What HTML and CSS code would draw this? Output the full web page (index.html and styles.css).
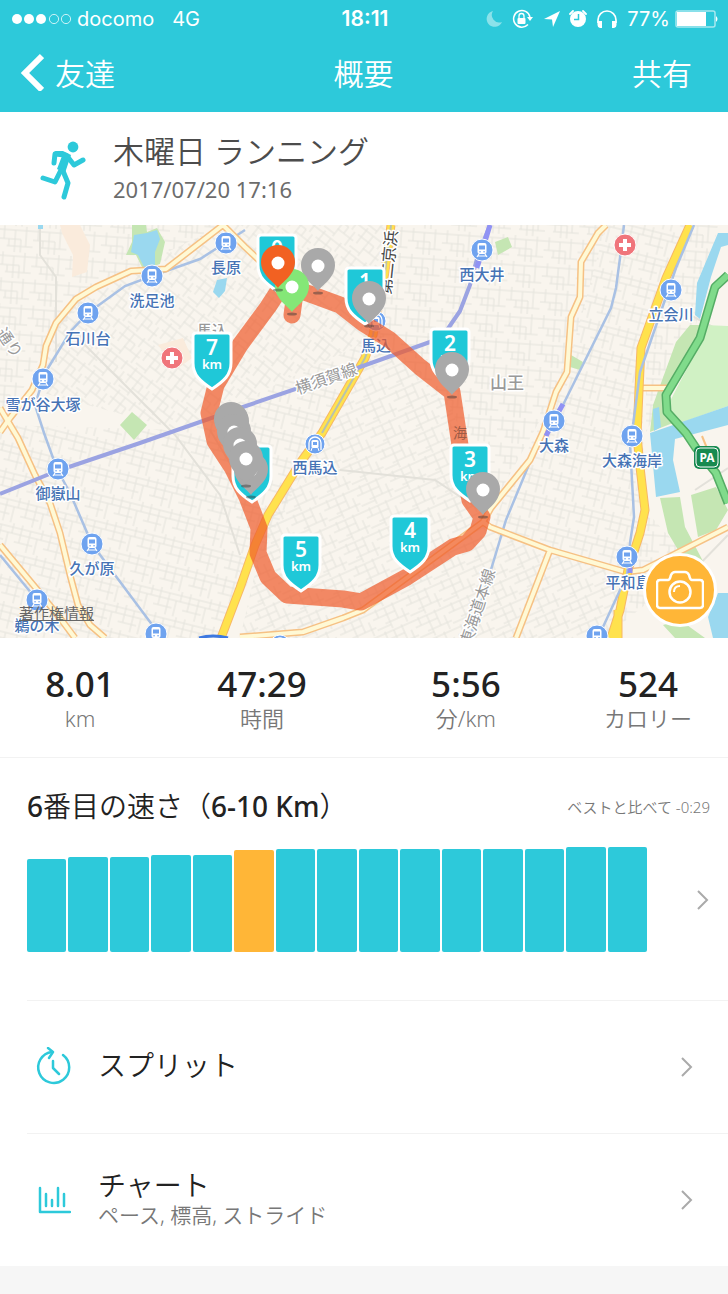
FILE: index.html
```html
<!DOCTYPE html>
<html lang="ja">
  <head>
    <meta charset="UTF-8" />
    <meta name="viewport" content="width=device-width, initial-scale=1.0" />
    <title>木曜日 ランニング - 概要</title>
    <link rel="stylesheet" href="styles.css">
  </head>
  <body>
    <header class="top">
      <div class="status-bar">
        <div class="status-left">
          <svg class="signal" width="62" height="12" viewBox="0 0 62 12">
            <g fill="#fff">
              <circle cx="6" cy="6" r="5" />
              <circle cx="18" cy="6" r="5" />
              <circle cx="30" cy="6" r="5" />
            </g>
            <g fill="none" stroke="#fff" stroke-opacity=".75">
              <circle cx="43" cy="6" r="4.6" />
              <circle cx="55" cy="6" r="4.6" />
            </g>
          </svg>
          <span class="carrier">docomo</span>
          <span>4G</span>
        </div>
        <span class="clock">18:11</span>
        <div class="status-right">
          <svg width="18" height="20" viewBox="0 0 18 20">
            <path d="M8 2A8 8 0 1 0 17 13 7.5 7.5 0 0 1 8 2Z" fill="#8be2ea" />
          </svg>
          <svg width="22" height="20" viewBox="0 0 22 20">
            <path d="M18 8A8.300 8.300 0 1 0 16 15.500" fill="none" stroke="#fff" stroke-width="1.5" />
            <path d="M15 8h6l-3 4z" fill="#fff" />
            <rect x="5.5" y="9" width="8" height="6" rx="1" fill="#fff" />
            <path d="M7 9V7a2.500 2.500 0 0 1 5 0v2" fill="none" stroke="#fff" stroke-width="1.3" />
          </svg>
          <svg width="17" height="20" viewBox="0 0 17 20">
            <path d="M17 2 10 18 9 10.500 1 10z" fill="#fff" />
          </svg>
          <svg width="18" height="20" viewBox="0 0 18 20">
            <circle cx="9" cy="10" r="8" fill="#fff" />
            <path d="M1 5 4 2M17 5 14 2" stroke="#fff" stroke-width="1.8" stroke-linecap="round" />
            <path d="M9.500 5v5.500H5" fill="none" stroke="#2dc9da" stroke-width="1.5" />
          </svg>
          <svg width="22" height="20" viewBox="0 0 22 20">
            <path d="M2 14v-3a9 9 0 0 1 18 0v3" fill="none" stroke="#fff" stroke-width="1.7" />
            <path d="M1.500 12H6v7H4a3 3 0 0 1-2.500-3zM20.500 12H16v7h2a3 3 0 0 0 2.500-3z" fill="#fff" />
          </svg>
          <span class="percent">77%</span>
          <svg width="44" height="20" viewBox="0 0 44 20">
            <rect x="1" y="2" width="39" height="16" rx="2" fill="none" stroke="#a8e8ef" stroke-width="1.5" />
            <rect x="2" y="3" width="29" height="14" fill="#fff" />
            <path d="M41 7q3 3 0 6z" fill="#fff" />
          </svg>
        </div>
      </div>
      <nav class="nav-bar">
        <a href="#friends" class="back">
          <svg width="24" height="38" viewBox="0 0 24 38">
            <path d="M22 3 5 20l17 17" fill="none" stroke="#fff" stroke-width="6" />
          </svg>
          友達
        </a>
        <h1>概要</h1>
        <button type="button" class="share">共有</button>
      </nav>
    </header>

    <main>
      <section class="activity">
        <svg class="runner" width="50" height="62" viewBox="0 0 50 62">
          <circle cx="35" cy="9" r="5.4" fill="#2dc9da" />
          <path d="M16 13h9l8 4-6 18-8-4 5-13z" fill="#2dc9da" />
          <g fill="none" stroke="#2dc9da" stroke-width="5" stroke-linecap="round" stroke-linejoin="round">
            <path d="M16 25l1-9 10 1M29 18l7 9 9-5" />
            <path d="M23 32l-6 12-12-4" />
            <path d="M25 33l5 12-4 14" />
          </g>
        </svg>
        <div>
          <h2>木曜日 ランニング</h2>
          <p>2017/07/20 17:16</p>
        </div>
      </section>

      <section class="map">
        <svg class="map-canvas" viewBox="0 0 728 413" role="img" aria-label="ランニングのルート">
          <defs>
            <pattern id="streets-a" width="34" height="26" patternUnits="userSpaceOnUse" patternTransform="rotate(4)">
              <path d="M0 4H34M0 13H22M8 20H34M5 0V13M16 4V26M27 0V20M22 13V26M10 13V20" />
            </pattern>
            <pattern id="streets-b" width="32" height="28" patternUnits="userSpaceOnUse" patternTransform="rotate(38)">
              <path d="M0 3H32M0 11H20M12 19H32M4 0V19M13 3V28M24 0V11M28 11V28M20 11V19M0 25H13" />
            </pattern>
            <pattern id="streets-c" width="36" height="24" patternUnits="userSpaceOnUse" patternTransform="rotate(-24)">
              <path d="M0 2H36M0 9H24M10 17H36M6 0V9M15 2V24M24 0V17M31 9V24M0 20H15" />
            </pattern>
            <pattern id="streets-d" width="30" height="26" patternUnits="userSpaceOnUse" patternTransform="rotate(14)">
              <path d="M0 4H30M0 10H30M0 18H19M5 0V18M14 4V26M22 10V26M26 0V10" />
            </pattern>

            <g id="train">
              <circle r="11" fill="#6fa3ef" stroke="#fff" />
              <rect x="-4.5" y="-7" width="9" height="11" rx="2" fill="#fff" />
              <path d="M-3-4.500h6v4h-6z" fill="#6fa3ef" />
              <path d="M-2 1.700h.1M2 1.700h.1" stroke="#6fa3ef" stroke-width="1.5" stroke-linecap="round" />
              <path d="M-3 4-5 7M3 4 5 7M-4 6h8" stroke="#fff" stroke-width="1.2" />
            </g>
            <g id="metro">
              <circle r="10" fill="#6fa3ef" stroke="#fff" />
              <path d="M-6 6V-1a6 6 0 0 1 12 0v7" fill="none" stroke="#fff" stroke-width="1.3" />
              <rect x="-3.5" y="-4" width="7" height="8" rx="1.5" fill="#fff" />
              <path d="M-2-2h4v3h-4z" fill="#6fa3ef" />
              <path d="M-3 4-4 7M3 4 4 7" stroke="#fff" />
            </g>
            <g id="hospital">
              <circle r="11" fill="#f0757b" stroke="#fff" />
              <path d="M0-6V6M-6 0H6" stroke="#fff" stroke-width="4" />
            </g>
            <path id="shield" d="M-16 1h32a3 3 0 0 1 3 3V31C19 43 12 49 0 57-12 49-19 43-19 31V4a3 3 0 0 1 3-3Z" />
            <g id="pin">
              <ellipse cx="0" cy="27" rx="5" ry="1.5" fill="#333" fill-opacity=".45" />
              <path d="M0 25C-4 19-17 12-17-1a17 17 0 0 1 34 0C17 12 4 19 0 25Z" />
              <circle r="6.5" fill="#fff" />
            </g>
          </defs>

          <rect width="728" height="413" fill="#f9f5ee" />

          <!-- street grids -->
          <g class="streets">
            <path d="M0 0h223L96 62 46 121 0 207z" fill="url(#streets-a)" />
            <path d="M223 0h167l-10 110-200 95-148-40 24-67L96 62z" fill="url(#streets-b)" />
            <path d="M390 0h216l-39 147-76 136-40-100-71-73z" fill="url(#streets-a)" />
            <path d="M380 110l71 73 40 100-128 102-60 22-63 6 30-130z" fill="url(#streets-c)" />
            <path d="M0 200l180 5 190-90-150 298H0z" fill="url(#streets-d)" />
            <path d="M606 0h84l-49 123 4 162-17 60-78-20-60-23 76-155z" fill="url(#streets-d)" />
            <path d="M363 385l120-85 145 45-17 68H240z" fill="url(#streets-c)" />
            <path d="M690 0h28l-22 100-50 108v-85zM645 285l50 55-75 60z" fill="url(#streets-a)" />
          </g>
          <g fill="none" stroke="#e3e1da" stroke-width="2">
            <path d="M40 0v30l16 22v85M80 115l95 95 45 60 20 60M210 205l30 50M480 285l-45-30-95-10M690 90l38 20M695 265l33-22M694 345l34-35" />
          </g>

          <!-- parks and water -->
          <g fill="#c5e6b3">
            <path d="M132 0h14l1 7 10-4 8 14-5 22-17 5-7-14H126l6-13z" />
            <path d="M132 187l15 13-13 15-14-15zM495 17l13-5 4 10-14 8zM571 130l12 7-3 8-10-3z" />
            <path d="M690 100l-14 17-23 63-3 27 23-9-7-28 34-57 4-13zM660 273l20-1 5 30 20 38-15 5-22-37zM691 270l25-8 12 23-12 20-18 7zM663 400l17-5 25 18h-30z" />
          </g>
          <path d="M704 100l24 1v80l-53 19-7-20 35-67z" fill="#d0f1c4" />
          <path d="M60 0h20l10 20-3 27-15 5 1-22-11-22zM158 120l25-7 9 20-15 11z" fill="#faebdc" />
          <g fill="#9ad8ef">
            <path d="M134 10l13-2 10-3 3 9-5 13v14l-11 1-6-12-7-3zM217 55l10-2-2 13-6 7-6-6zM38 0h5v4h-5z" />
            <path d="M718 8h10v12l-7 2-10 30-11 42-5-4 2-32zM650 208l78-27v19l-53 14-2 21 7 32-24 5zM653 184l6-2 2 20-7 4zM718 368h10v45h-15l-5-21z" />
          </g>

          <!-- railways -->
          <g fill="none" stroke="#a9c1e4" stroke-width="2.5">
            <path d="M245 5 225 18 200 34 152 51 125 61 88 88 70 107 45 148 35 180 44 208 57 244 70 268 92 319 115 350 156 405" />
            <path d="M0 330 37 375M624 0 620 33 616 63 611 83 563 180M545 208 535 225 506 295 490 348 470 413" />
          </g>

          <!-- roads, orange casing first -->
          <g fill="none" stroke-linejoin="round">
            <g stroke="#f6c184" stroke-width="7">
              <path d="M0 207 10 193 32 165 43 140 46 121 56 98 76 74 96 62 131 46 166 44 223 0 245 22 262 38" />
              <path d="M0 183 18 213 35 250 50 278 60 308 70 350 78 380 90 400 105 413M0 320 35 362 60 393 75 413" />
              <path d="M606 0 598 8 581 37 580 72 571 92 567 147 556 167 543 207 530 235 491 283 483 297 490 302 550 325 626 347 643 345 728 302M550 325 516 413M483 297 363 385 343 393 303 407 240 412M643 163h25" />
            </g>
            <path d="M702 211l26 64" stroke="#f6c184" stroke-width="2" />
            <g stroke="#fff9d5" stroke-width="4">
              <path d="M0 207 10 193 32 165 43 140 46 121 56 98 76 74 96 62 131 46 166 44 223 0 245 22 262 38" />
              <path d="M0 183 18 213 35 250 50 278 60 308 70 350 78 380 90 400 105 413M0 320 35 362 60 393 75 413" />
              <path d="M606 0 598 8 581 37 580 72 571 92 567 147 556 167 543 207 530 235 491 283 483 297 490 302 550 325 626 347 643 345 728 302M550 325 516 413M483 297 363 385 343 393 303 407 240 412M643 163h25" />
            </g>
            <g stroke="#f7b765" stroke-width="9">
              <path d="M391 0 385 47 373 110 365 133 322 208 300 238 268 290 255 320 240 363 221 413" />
              <path d="M690 0 666 53 641 123 640 143 637 210 640 242 645 285 640 308 628 345 620 385 611 413M618 385v28" />
            </g>
            <g stroke="#ffe24d" stroke-width="7">
              <path d="M391 0 385 47 373 110 365 133 322 208 300 238 268 290 255 320 240 363 221 413" />
              <path d="M690 0 666 53 641 123 640 143 637 210 640 242 645 285 640 308 628 345 620 385 611 413M618 385v28" />
            </g>
            <path d="M391 0 385 47 373 110 365 133 322 208" stroke="#b9c2ae" stroke-width="2" />
            <path d="M694 0 676 43 640 147 633 200M630 218 634 292 630 318 627 350 603 402" stroke="#a9c1e4" stroke-width="2.5" />
            <path d="M0 269 57 246 140 218 240 183 360 142 430 117 447 105 460 86 470 60 478 30 490 0" stroke="#9ba3e2" stroke-width="4" />
            <path d="M490 0 477 43M563 179 558 188M549 205l-3 6M630 342v6" stroke="#9092f4" stroke-width="5" />
            <path d="M728 50 715 62 700 113 666 170 667 187 686 208 696 223 716 248 728 278" stroke="#55ad65" stroke-width="9" />
            <path d="M728 50 715 62 700 113 666 170 667 187 686 208 696 223 716 248 728 278" stroke="#80db8b" stroke-width="6" />
          </g>

          <!-- stations and places -->
          <use href="#train" x="226" y="18" />
          <use href="#train" x="152" y="51" />
          <use href="#train" x="88" y="88" />
          <use href="#train" x="43" y="154" />
          <use href="#train" x="58" y="244" />
          <use href="#train" x="92" y="319" />
          <use href="#train" x="37" y="375" />
          <use href="#train" x="156" y="409" />
          <use href="#train" x="482" y="25" />
          <use href="#train" x="671" y="65" />
          <use href="#train" x="554" y="196" />
          <use href="#train" x="632" y="211" />
          <use href="#train" x="627" y="332" />
          <use href="#train" x="597" y="411" />
          <use href="#metro" x="315" y="219" />
          <use href="#metro" x="376" y="96" />
          <use href="#metro" x="280" y="420" />
          <use href="#hospital" x="172" y="133" />
          <use href="#hospital" x="625" y="20" />
          <path d="M199 413q14-4 29 0" fill="none" stroke="#3d78e0" stroke-width="3" />

          <g class="map-label">
            <text x="226" y="48">長原</text>
            <text x="152" y="81">洗足池</text>
            <text x="88" y="119">石川台</text>
            <text x="43" y="185">雪が谷大塚</text>
            <text x="58" y="274">御嶽山</text>
            <text x="92" y="349">久が原</text>
            <text x="37" y="406">鵜の木</text>
            <text x="482" y="55">西大井</text>
            <text x="671" y="95">立会川</text>
            <text x="554" y="226">大森</text>
            <text x="632" y="241">大森海岸</text>
            <text x="628" y="363">平和島</text>
            <text x="315" y="248">西馬込</text>
            <text x="376" y="126">馬込</text>
          </g>
          <g class="map-label area">
            <text x="212" y="111">馬込</text>
            <text class="large" x="507" y="164">山王</text>
            <text class="line" transform="translate(328 159) rotate(-19)">横須賀線</text>
            <text class="line" transform="translate(483 384) rotate(-72)">東海道本線</text>
            <text class="line" transform="translate(5 121) rotate(55)">通り</text>
          </g>
          <g class="map-label road">
            <text class="line" transform="translate(394 38) rotate(-84)">第二京浜</text>
          </g>

          <g>
            <rect x="694" y="221" width="26" height="23" rx="5" fill="#178a50" />
            <rect x="696" y="223" width="22" height="19" rx="4" fill="none" stroke="#fff" />
            <text class="parking" x="707" y="237">PA</text>
          </g>

          <!-- running route -->
          <path class="route" d="M292 90 295 68 281 62 268 82 240 120 216 160 209 188 215 216 232 242 247 272 259 303 258 328 268 352 287 370 343 374 361 377 407 352 453 322 467 318 478 306 482 292 470 275 463 240 457 200 452 167 420 142 390 115 363 98 340 80 310 69 295 64" />
          <text class="route-label" x="460" y="213">海</text>

          <!-- kilometre markers -->
          <g class="km">
            <g transform="translate(277 9)"><use href="#shield" /><text y="22">0</text><text class="unit" y="37">km</text></g>
            <g transform="translate(365 42)"><use href="#shield" /><text y="22">1</text><text class="unit" y="37">km</text></g>
            <g transform="translate(450 103)"><use href="#shield" /><text y="23">2</text><text class="unit" y="37">km</text></g>
            <g transform="translate(470 219)"><use href="#shield" /><text y="23">3</text><text class="unit" y="37">km</text></g>
            <g transform="translate(410 290)"><use href="#shield" /><text y="23">4</text><text class="unit" y="37">km</text></g>
            <g transform="translate(301 309)"><use href="#shield" /><text y="23">5</text><text class="unit" y="37">km</text></g>
            <g transform="translate(252 220)"><use href="#shield" /><text y="23">6</text><text class="unit" y="37">km</text></g>
            <g transform="translate(212 107)"><use href="#shield" /><text y="23">7</text><text class="unit" y="37">km</text></g>
          </g>

          <!-- pins, later ones lie on top -->
          <g fill="#a9a9a9">
            <use href="#pin" x="318" y="41" />
            <use href="#pin" x="369" y="74" />
            <use href="#pin" x="452" y="145" />
            <use href="#pin" x="483" y="265" />
            <use href="#pin" x="251" y="245" />
            <use href="#pin" x="231" y="195" />
            <use href="#pin" x="232" y="197" />
            <use href="#pin" x="234" y="207" />
            <use href="#pin" x="240" y="220" />
            <use href="#pin" x="246" y="234" />
          </g>
          <use href="#pin" x="292" y="62" fill="#84e777" />
          <use href="#pin" x="278" y="38" fill="#f26122" />
        </svg>
        <a href="#legal" class="legal">著作権情報</a>
        <button type="button" class="camera" aria-label="写真を追加">
          <svg width="48" height="40" viewBox="0 0 48 40" fill="none" stroke="#fff" stroke-width="2.5" stroke-linejoin="round">
            <path d="M4 10h8c2 0 2-2 3-5 1-2 2-3 4-3h10c2 0 3 1 4 3 1 3 1 5 3 5h8c2 0 3 1 3 3v22c0 2-1 3-3 3H4c-2 0-3-1-3-3V13c0-2 1-3 3-3Z" />
            <circle cx="24" cy="22" r="10.5" />
            <path d="M18 22q0-6 6-6" stroke-width="2" />
          </svg>
        </button>
      </section>

      <section class="stats">
        <div class="stat">
          <strong>8.01</strong>
          <span>km</span>
        </div>
        <div class="stat">
          <strong>47:29</strong>
          <span>時間</span>
        </div>
        <div class="stat">
          <strong>5:56</strong>
          <span>分/km</span>
        </div>
        <div class="stat">
          <strong>524</strong>
          <span>カロリー</span>
        </div>
      </section>

      <section class="pace">
        <div class="pace-head">
          <h3><b>6</b>番目の速さ（<b>6-10 Km</b>）</h3>
          <p>ベストと比べて -0:29</p>
        </div>
        <a href="#history" class="pace-body">
          <div class="bars">
            <span style="height: 93px"></span>
            <span style="height: 95px"></span>
            <span style="height: 95px"></span>
            <span style="height: 97px"></span>
            <span style="height: 97px"></span>
            <span class="current" style="height: 102px"></span>
            <span style="height: 103px"></span>
            <span style="height: 103px"></span>
            <span style="height: 103px"></span>
            <span style="height: 103px"></span>
            <span style="height: 103px"></span>
            <span style="height: 103px"></span>
            <span style="height: 103px"></span>
            <span style="height: 105px"></span>
            <span style="height: 105px"></span>
          </div>
          <svg class="chevron" width="14" height="22" viewBox="0 0 14 22">
            <path d="M2 2l9 9-9 9" />
          </svg>
        </a>
      </section>

      <a href="#splits" class="row">
        <svg class="row-icon" width="36" height="40" viewBox="0 0 36 40">
          <path d="M28 8A15.500 15.500 0 1 1 17 5" />
          <path d="M13 1l5 4-4 6M18 14v7l6 6" />
        </svg>
        <div class="row-text">
          <h3>スプリット</h3>
        </div>
        <svg class="chevron" width="14" height="22" viewBox="0 0 14 22">
          <path d="M2 2l9 9-9 9" />
        </svg>
      </a>

      <a href="#charts" class="row">
        <svg class="row-icon" width="36" height="40" viewBox="0 0 36 40">
          <path d="M5 8v24h30M11 14v12M17 20v6M23 8v18M29 14v12" />
        </svg>
        <div class="row-text">
          <h3>チャート</h3>
          <p>ペース, 標高, ストライド</p>
        </div>
        <svg class="chevron" width="14" height="22" viewBox="0 0 14 22">
          <path d="M2 2l9 9-9 9" />
        </svg>
      </a>
    </main>
  </body>
</html>
```
FILE: styles.css
```css
:root {
  --primary-color: #2dc9da;
  --accent-color: #ffb637;
  --text-color: #222;
  --muted-color: #777;
  --line-color: #f2f2f2;
}

* {
  box-sizing: border-box;
  margin: 0;
  padding: 0;
}

body {
  font-family: "Noto Sans", "Noto Sans CJK JP", sans-serif;
  color: var(--text-color);
  background-color: #f6f6f6;
}

a {
  color: inherit;
  text-decoration: none;
}

button {
  border: none;
  background: none;
  color: inherit;
  font-family: inherit;
  cursor: pointer;
}

svg {
  display: block;
  flex-shrink: 0;
}

main {
  background-color: #fff;
}

.top {
  background-color: var(--primary-color);
  color: #fff;
}

.status-bar {
  display: grid;
  grid-template-columns: 1fr auto 1fr;
  align-items: center;
  height: 37px;
  padding: 0 9px 0 11px;
  font-family: Inter, sans-serif;
  font-size: 20px;
}

.status-left,
.status-right {
  display: flex;
  align-items: center;
}

.carrier {
  margin: 0 18px 0 4px;
}

.clock {
  font-size: 21px;
  font-weight: 600;
}

.status-right {
  justify-content: flex-end;
  gap: 9px;
}

.percent {
  margin-right: -4px;
}

.nav-bar {
  display: grid;
  grid-template-columns: 1fr auto 1fr;
  align-items: center;
  height: 75px;
  padding: 0 36px 6px 20px;
  font-size: 30px;
  font-weight: 350;
}

.nav-bar h1 {
  font-size: 30px;
  font-weight: 350;
  padding-left: 15px;
}

.back {
  display: flex;
  align-items: center;
  gap: 11px;
}

.share {
  justify-self: end;
  font-size: 30px;
  font-weight: 350;
}

.activity {
  display: flex;
  align-items: center;
  gap: 25px;
  height: 113px;
  padding-left: 38px;
}

.activity h2 {
  color: #4c4c4c;
  font-size: 31px;
  font-weight: 350;
  line-height: 40px;
}

.activity p {
  color: #6c6c6c;
  font-size: 22px;
  line-height: 36px;
}

.map {
  position: relative;
  overflow: hidden;
}

.map-canvas {
  width: 100%;
}

pattern path {
  fill: none;
  stroke: #e4e3dc;
  stroke-width: 1;
}

.map-label {
  fill: #4673b5;
  font-size: 15px;
  font-weight: 500;
  text-anchor: middle;
  stroke: #fff;
  stroke-width: 3;
  stroke-linejoin: round;
  paint-order: stroke;
}

.area {
  fill: #999;
}

.area .large {
  font-size: 17px;
}

.map-label .line {
  font-size: 16px;
  font-weight: 400;
}

.road {
  fill: #444;
}

.parking {
  fill: #fff;
  font-size: 12px;
  font-weight: 700;
  text-anchor: middle;
}

.route {
  fill: none;
  stroke: #ef5a2a;
  stroke-opacity: 0.7;
  stroke-width: 17;
  stroke-linecap: round;
  stroke-linejoin: round;
}

.route-label {
  fill: #9d5b45;
  font-size: 14px;
  text-anchor: middle;
}

.km use {
  fill: #1fc8d8;
  stroke: #fff;
  stroke-width: 3;
}

.km text {
  fill: #fff;
  font-size: 21px;
  font-weight: 600;
  text-anchor: middle;
}

.km .unit {
  font-size: 13px;
}

.legal {
  position: absolute;
  left: 19px;
  bottom: 15px;
  color: #666;
  font-size: 15px;
  line-height: 20px;
  text-decoration: underline;
}

.camera {
  position: absolute;
  right: 11px;
  bottom: 11px;
  display: flex;
  align-items: center;
  justify-content: center;
  width: 74px;
  height: 74px;
  border: 3px solid #fff;
  border-radius: 50%;
  background-color: var(--accent-color);
}

.stats {
  display: grid;
  grid-template-columns: 22fr 28fr 28fr 22fr;
  padding: 24px 0 27px;
  border-bottom: 1px solid var(--line-color);
  text-align: center;
}

.stat strong,
.stat span {
  display: block;
}

.stat strong {
  font-size: 35px;
  font-weight: 500;
  line-height: 44px;
}

.stat span {
  color: var(--muted-color);
  font-size: 22px;
  font-weight: 350;
  line-height: 24px;
}

.pace {
  height: 242px;
  padding: 28px 18px 0 27px;
}

.pace-head {
  display: flex;
  align-items: center;
  justify-content: space-between;
}

.pace h3 {
  font-size: 28px;
  font-weight: 350;
  line-height: 40px;
}

.pace b {
  font-weight: 500;
}

.pace p {
  color: var(--muted-color);
  font-size: 15px;
  font-weight: 350;
}

.pace-body {
  display: flex;
  align-items: center;
  justify-content: space-between;
  margin-top: 21px;
}

.bars {
  display: flex;
  align-items: flex-end;
  gap: 2px;
  flex: 1;
  height: 105px;
  margin-right: 49px;
}

.bars span {
  flex: 1;
  border-radius: 2px;
  background-color: var(--primary-color);
}

.bars .current {
  background-color: var(--accent-color);
}

.chevron {
  fill: none;
  stroke: #aaa;
  stroke-width: 2;
}

.row {
  display: flex;
  align-items: center;
  height: 133px;
  margin-left: 27px;
  padding: 0 34px 0 8px;
  border-top: 1px solid var(--line-color);
}

.row-icon {
  fill: none;
  stroke: var(--primary-color);
  stroke-width: 2.5;
  stroke-linecap: round;
  stroke-linejoin: round;
}

.row-text {
  flex: 1;
  padding: 0 0 5px 27px;
}

.row h3 {
  font-size: 28px;
  font-weight: 350;
  line-height: 34px;
}

.row p {
  color: var(--muted-color);
  font-size: 21px;
  font-weight: 350;
  line-height: 26px;
}
```
